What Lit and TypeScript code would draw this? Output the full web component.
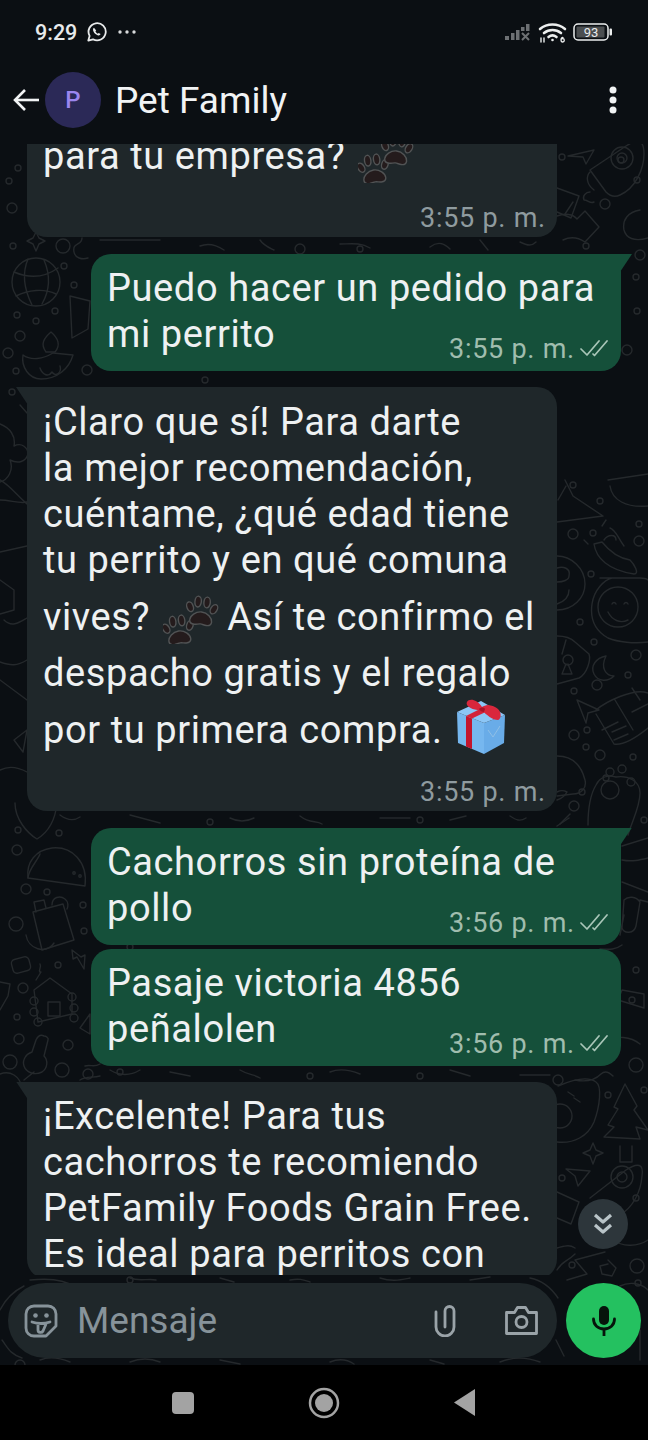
import { LitElement, html, css, svg } from "lit";
import { customElement } from "lit/decorators.js";

type Line = { text: string; tall?: boolean; emoji?: "paws" | "gift"; after?: string };
type Msg = { out: boolean; time: string; lines: Line[]; gap: number; first?: boolean; tail?: boolean; roomy?: boolean };

const MESSAGES: Msg[] = [
  { out: false, time: "3:55 p. m.", first: true, gap: 0, lines: [{ text: "para tu empresa?", emoji: "paws" }] },
  { out: true, time: "3:55 p. m.", gap: 17, tail: true, lines: [{ text: "Puedo hacer un pedido para" }, { text: "mi perrito" }] },
  {
    out: false, time: "3:55 p. m.", gap: 16, tail: true, roomy: true,
    lines: [
      { text: "¡Claro que sí! Para darte" },
      { text: "la mejor recomendación," },
      { text: "cuéntame, ¿qué edad tiene" },
      { text: "tu perrito y en qué comuna" },
      { text: "vives?", emoji: "paws", after: "Así te confirmo el", tall: true },
      { text: "despacho gratis y el regalo", tall: true },
      { text: "por tu primera compra.", emoji: "gift", tall: true },
    ],
  },
  { out: true, time: "3:56 p. m.", gap: 17, tail: true, lines: [{ text: "Cachorros sin proteína de" }, { text: "pollo" }] },
  { out: true, time: "3:56 p. m.", gap: 4, lines: [{ text: "Pasaje victoria 4856" }, { text: "peñalolen" }] },
  {
    out: false, time: "", gap: 16, tail: true,
    lines: [
      { text: "¡Excelente! Para tus" },
      { text: "cachorros te recomiendo" },
      { text: "PetFamily Foods Grain Free." },
      { text: "Es ideal para perritos con" },
    ],
  },
];

const paw = (x: number, y: number, s: number) => svg`
  <g transform="translate(${x} ${y}) rotate(${s})" fill="#241b1c" stroke="#515354" stroke-width="1.4">
    <path d="M0 4c-6 0-11 5-11 9 0 3 2 4 5 4 2 0 4-1 6-1s4 1 6 1c3 0 5-1 5-4 0-4-5-9-11-9z"/>
    <ellipse cx="-12" cy="0" rx="3.2" ry="5" transform="rotate(-25 -12 0)"/>
    <ellipse cx="-4.5" cy="-6" rx="3.2" ry="5.4"/>
    <ellipse cx="4.5" cy="-6" rx="3.2" ry="5.4"/>
    <ellipse cx="12" cy="0" rx="3.2" ry="5" transform="rotate(25 12 0)"/>
  </g>`;

const PAWS = html`<svg class="emoji paws" viewBox="0 0 56 54">${paw(15, 37, -8)}${paw(39, 18, 6)}</svg>`;

const GIFT = html`<svg class="emoji gift" viewBox="0 0 50 56">
  <path d="M0 13 27 24V55L1 44z" fill="#76b7ef"/>
  <path d="M27 24 48 16 47 44 27 55z" fill="#69ace8"/>
  <path d="M0 13 24 2 48 16 27 24z" fill="#8cc6f6"/>
  <path d="M9 17 15 19.500V50L9 47.500z" fill="#c3152e"/>
  <path d="M9 17 31 6 37 9 15 19.500z" fill="#d3233a"/>
  <path d="M31 31 36 38 43 27" fill="none" stroke="#8fbfe6" stroke-width="1"/>
  <path d="M23 11C15 11 8 7 10 3c2-4 10-3 15 5 4-3 12-2 16 2 4 4 3 10 0 11-5 0-12-5-16-10z" fill="#d9273c"/>
  <path d="M22 10c2-2 5-2 6 0l-1 3c-2 0-4-1-5-3z" fill="#a81229"/>
</svg>`;

const ring = (cx: number, cy: number, r = 4) => svg`<circle cx=${cx} cy=${cy} r=${r}/>`;
const RINGS: [number, number, number][] = [
  [13, 246, 3], [63, 246, 7], [64, 266, 3], [74, 285, 3], [17, 315, 3], [55, 311, 3], [36, 321, 3], [20, 336, 5], [8, 353, 5], [16, 371, 3], [87, 370, 5], [12, 392, 3],
  [18, 830, 3], [59, 833, 3], [71, 802, 3], [17, 850, 5], [26, 889, 5], [47, 892, 3], [83, 905, 3], [16, 924, 7], [84, 931, 3], [58, 965, 3], [23, 988, 5], [17, 1017, 3], [19, 1039, 5], [68, 1045, 5], [10, 1062, 7], [62, 1070, 7],
  [573, 485, 3], [600, 501, 3], [573, 534, 5], [593, 533, 3], [639, 524, 3], [639, 541, 5], [591, 574, 3], [580, 622, 3], [594, 642, 3], [636, 655, 5], [628, 675, 3], [597, 685, 5], [574, 691, 3],
  [574, 735, 5], [587, 730, 3], [586, 747, 3], [600, 755, 5], [633, 757, 3], [582, 792, 3], [574, 806, 5], [644, 820, 3],
  [632, 1000, 3], [636, 970, 3], [558, 1080, 5], [608, 1095, 3], [636, 1065, 7], [644, 1090, 3], [562, 1178, 3], [636, 1198, 3], [572, 1265, 3], [637, 1266, 7], [638, 1283, 3],
  [621, 160, 3], [637, 180, 3], [562, 157, 3], [605, 204, 5], [636, 277, 3], [640, 255, 5], [586, 246, 3], [637, 311, 3], [627, 350, 5],
  [18, 168, 3], [12, 208, 5], [9, 181, 3], [120, 1072, 3], [88, 1074, 5], [420, 1076, 3], [310, 1076, 3], [210, 822, 3], [420, 820, 3], [205, 380, 3], [300, 249, 5], [360, 249, 3], [130, 1280, 3], [20, 1365, 5], [130, 947, 3],
];

const DOODLES = svg`
  <g transform="translate(0 -144)">
    <!-- rockets -->
    <path d="M590 170 626 146c14-9 18-4 18 8 0 14-8 34-24 41-6 3-10 1-14-3z"/><circle cx="622" cy="158" r="11"/><circle cx="622" cy="158" r="5"/>
    <path d="M590 172c-4 4-4 12 4 18 M590 192c-4 0-8 4-6 8 4 0 6 4 10 2"/>
    <path d="M590 1198 626 1170c12-8 18-6 16 6-1 14-8 32-24 40l-16 4"/><circle cx="622" cy="1177" r="11"/><circle cx="622" cy="1177" r="5"/>
    <path d="M568 156l26-6-8 14-3-7z"/><path d="M566 1169l24 2-12 15-3-10z"/>
    <path d="M557 188l22 8-8 22-14-6 M565 214l8-12"/><path d="M557 1192l22 10-8 22-14-6"/>
    <path d="M557 216c8-3 16-2 20 3l8-8 14 16-14 15c-6-4-14-6-22-2"/>
    <path d="M640 210c-12 2-18 10-16 20 2 8 10 12 24 8"/>
    <!-- globe, lamp -->
    <circle cx="36" cy="282" r="24"/><path d="M14 272c14 6 30 6 44-4 M16 296c12-6 28-8 40-2 M28 259c-6 14-4 30 4 46 M44 260c6 14 6 30-2 44"/>
    <path d="M36 232l3 6 6 3-6 3-3 7-3-7-6-3 6-3z"/>
    <path d="M70 296l20 5-2 28-16 9z"/>
    <path d="M23 355c8 6 20 4 30-2l20 2c-4 14-16 24-32 24-12 0-20-12-18-24z"/><path d="M46 352c-6-8-2-14 5-20 7 6 10 13 4 20z"/><path d="M40 368c2 6 8 10 12 4 4 6 10 0 8-6"/>
    <path d="M82 238c0 8-10 4-8 14 1 6 8 8 14 6"/>
    <!-- left cloud -->
    <path d="M0 424c10 4 16 12 14 22 8-4 14 2 14 8 -2 8-10 10-18 6 4 10-2 20-10 22"/><path d="M0 500c10 0 20 4 27 2"/><path d="M0 480c8 4 16 14 27 24"/>
    <path d="M0 552l27-6"/><path d="M20 405l7 8"/><path d="M4 620c8 8 16 2 23-2"/><path d="M0 680l27 20"/><path d="M14 740l13-10-4 22z"/><path d="M0 770c8-4 16-4 27 2"/>
    <path d="M0 580l14 10v20l-14 4"/><path d="M27 660c-10 6-16 6-27 2"/>
    <!-- shield, taco, bag, house, key -->
    <path d="M15 803c0 16 12 30 22 36 10-6 18-16 20-36"/>
    <path d="M28 878c-2-16 8-28 24-30 20-2 36 14 33 38z"/><path d="M28 878c0-8 10-18 12-24"/><circle cx="74" cy="873" r="1.2"/><circle cx="80" cy="876" r="1.2"/>
    <path d="M33 912l30-8 11 36-32 10z"/><path d="M36 912l-2-10 10-2 2 8 M52 905c0-8 8-10 13-6 4 3 3 8 2 10"/>
    <path d="M26 935c2 14 20 20 28 8"/><path d="M72 950l9 7 4-2-1 14-7-12-4 2z"/>
    <rect x="12" y="958" width="18" height="14" rx="4" transform="rotate(-15 21 965)"/>
    <path d="M0 982l10 2-2 12-8 14"/><path d="M34 990l16-12 22 16v20l-34 8z"/><rect x="48" y="1002" width="12" height="14"/><circle cx="34" cy="1001" r="4"/><circle cx="34" cy="1012" r="4"/><circle cx="38" cy="1022" r="4"/><circle cx="72" cy="997" r="4"/><circle cx="74" cy="1008" r="4"/><circle cx="74" cy="1018" r="4"/>
    <path d="M36 980l5-8 M40 972c-2-3 2-4 0-8"/><path d="M80 1028l10-14v20z"/>
    <path d="M44 1036c-4-2-6 0-8 4l-4 12c-6 2-10 8-8 14 2 6 10 10 18 6 6-4 6-12 2-16l4-16c1-2-2-4-4-4z"/><path d="M24 1080l10-8"/>
    <path d="M85 1066c6-2 8 2 15-2"/><path d="M80 1080c6-4 12-2 20-4"/><path d="M0 1074c10-4 20 2 22 14"/>
    <!-- pepper, triangle, smiley, lock, moon -->
    <path d="M565 480l8 16 30 20-46 6"/><path d="M558 500l8-14"/><path d="M610 486c2 14 16 22 38 20"/><path d="M608 480l40-6"/>
    <path d="M594 544c2 14 14 26 40 30 6 0 0-10-4-14-12-2-20-8-28-18z"/><path d="M610 528c6 2 8 10 14 18 M604 540c4-6 12-6 12 0 M588 544l-4-4"/><path d="M602 526l4-6"/>
    <path d="M557 556c14 0 28 12 28 28 0 14-12 26-28 26"/><path d="M557 568c6-2 14 0 12 8 0 4-6 6-12 6 M557 604c6-2 12-6 12-14"/>
    <path d="M600 578h40c6 0 8 2 8 2 M648 642c-14 2-30 0-40-4-14-8-18-20-16-34 2-14 12-24 20-26"/><circle cx="618" cy="607" r="20"/><path d="M612 604c1-2 3-2 4 0 M624 604c1-2 3-2 4 0 M608 612c4 8 12 12 20 8"/>
    <path d="M557 636c6 0 14 2 18 6l14 12c2 6-2 20-10 24l-22 6"/><path d="M566 640l-4 14"/><circle cx="568" cy="660" r="5"/><path d="M566 664l-4 10h10l-4-10"/>
    <path d="M606 656c-10 2-16 10-12 18 4 8 14 8 20 2-8 0-14-8-8-20z"/>
    <path d="M577 700l22 10-11 3-2 10z"/>
    <path d="M596 710c12-10 36-20 48-18l8 2 M596 714l18 30c10 2 24-8 34-16 M615 700l18 30 M618 722l-16 8 M640 700l-8-12 M632 712l16-8"/><path d="M612 732l14-6 M614 740l14-6"/>
    <!-- burger, paw -->
    <path d="M557 756c14 0 24 8 28 24 2 8-4 14-12 14l-16 2"/><path d="M557 800c6-2 8-4 10-8-4-2-6-2-10 0"/>
    <path d="M588 825c0-18 2-30 8-40 4-8 12-10 20-8 12-2 24 4 24 16 0 14-8 28-12 42"/><circle cx="610" cy="790" r="9"/><circle cx="610" cy="772" r="4"/><circle cx="622" cy="769" r="4"/><circle cx="631" cy="782" r="4"/><circle cx="606" cy="778" r="3"/>
    <path d="M557 826l12-8"/><path d="M560 824l10-10"/>
    <!-- bottle/food lower right -->
    <path d="M622 846l26-8 M622 860c10 2 18 0 26-2 M622 882l26 10"/><path d="M624 915l-4 20 M624 900c4-4 12-4 16 2l-4 24c-2 8-12 8-14 2z M640 900l8 2"/>
    <path d="M622 990l-4 10 26 8v-14z"/><path d="M622 945c-8 6-16 4-22 4"/><path d="M610 1040c6-4 20-4 30 4"/>
    <!-- lower right avatar, tree -->
    <path d="M575 1080c10 2 20 0 26-6 4-4 8-2 12 2"/>
    <path d="M558 1086c14-6 30-10 38-4 6 4 4 24-2 40-6 14-20 22-37 20"/><circle cx="560" cy="1116" r="12"/><path d="M568 1092l6 4 M574 1098l6 4"/>
    <path d="M625 1084l12 22-3 4 14 20-12-3 4 12-36-2 10-10-6-2 10-16-4-2z"/><path d="M632 1146v16h-12v-16"/>
    <path d="M593 1143l3 7 7 3-7 3-3 8-3-8-7-3 7-3z"/><path d="M608 1260l8 8-4 8-10-2-2-8 8-2"/>
    <path d="M605 1252l-30 8 12 14-20 6"/>
    <path d="M557 1248c8-2 12-4 18 0 M575 1254c-8 8-12 6-18 16"/><path d="M612 1240c10 6 24 8 36 0"/><path d="M620 1286c8-4 20-4 28 4"/>
    <!-- gaps between bubbles -->
    <path d="M100 240h60 M200 246c10-4 18 0 24 4 M260 240c4 6 10 8 14 10 M340 244c10 0 20-2 30 4 M430 247c8-6 14-4 20 2 M480 240l8 10 M520 242c8 4 12 4 16 0"/>
    <path d="M60 815c8 6 14 6 20 2 M130 815l30 8 M230 818c8 4 16 4 24 0 M300 816c10 8 16 4 22 8 M380 818h30 M450 820l16-4 M510 816c6 4 10 6 16 2"/>
    <path d="M110 1070c10 6 20 6 30 0 M170 1072l20 4 M240 1070c10 6 14 4 20 8 M330 1072c10-4 20-2 30 2 M450 1070l20 6 M520 1075h30"/>
    <path d="M30 1280c20-2 30 0 40 4 M130 1278c10 4 18 0 26 2 M220 1278l14 4 M290 1280c10-2 14 0 20 2 M380 1278c12 4 20 2 30 0 M470 1280l20-3 M530 1278c10 2 20 8 28 20"/>
    <path d="M40 1360c10-4 20-2 30 2 M130 1362c10-4 20-4 30 0 M220 1360l20 4 M330 1362c10-4 18-2 24 2 M430 1360l14 4 M500 1362c10-4 24-6 40 0 M556 1340l8 16 M640 1330v30"/>
    <path d="M0 1310c4-8 12-18 24-24"/><path d="M2 1340c6 8 8 14 20 18"/>
    ${RINGS.map(([x, y, r]) => ring(x, y, r))}
  </g>`;

@customElement("app-root")
export class AppRoot extends LitElement {
  static styles = css`
    :host {
      display: block;
      width: 648px;
      height: 1440px;
      font-family: Roboto, "Noto Sans", sans-serif;
      background: #000;
      color: #eef1f2;
    }
    .screen {
      height: 1440px;
      display: flex;
      flex-direction: column;
    }
    .top {
      flex: none;
      height: 144px;
      background: #0b0f13;
      box-sizing: border-box;
    }
    .status {
      height: 56px;
      padding: 8px 35px 0 35px;
      box-sizing: border-box;
      display: flex;
      align-items: center;
      gap: 10px;
      font-size: 21.5px;
      font-weight: 500;
      color: #e8eaeb;
    }
    .status .right {
      margin-left: auto;
      display: flex;
      align-items: center;
      gap: 6px;
    }
    .batt {
      font-size: 13px;
      font-weight: 400;
      fill: #e8eaeb;
      font-family: Roboto, sans-serif;
    }
    .toolbar {
      height: 88px;
      display: flex;
      align-items: center;
      padding: 0 31px 0 13px;
    }
    .avatar {
      width: 56px;
      height: 56px;
      border-radius: 50%;
      background: #2b2957;
      color: #9b86ee;
      font-size: 24px;
      font-weight: 500;
      display: flex;
      align-items: center;
      justify-content: center;
      margin-left: 6px;
    }
    .title {
      font-size: 37px;
      margin-left: 14px;
      color: #f1f3f4;
    }
    .kebab {
      margin-left: auto;
    }
    .chat {
      flex: 1;
      min-height: 0;
      position: relative;
      background: #0b0f13;
      display: flex;
      flex-direction: column;
      overflow: hidden;
    }
    .doodles {
      position: absolute;
      inset: 0;
      width: 648px;
      height: 1221px;
      fill: none;
      stroke: #25292c;
      stroke-width: 1.4;
      stroke-linecap: round;
      stroke-linejoin: round;
    }
    .list {
      flex: 1;
      min-height: 0;
      overflow: hidden;
      position: relative;
      display: flex;
      flex-direction: column;
    }
    .bubble {
      flex: none;
      position: relative;
      width: 530px;
      box-sizing: border-box;
      border-radius: 20px;
      padding: 11px 13px 2px 16px;
      font-size: 38px;
      letter-spacing: 0.6px;
      background: #1f272a;
      margin-left: 27px;
    }
    .bubble.roomy {
      padding-top: 12px;
    }
    .bubble.out {
      background: #15503a;
      margin-left: 91px;
      padding: 11px 13px 14px 16px;
    }
    .bubble.tail.in-msg {
      border-top-left-radius: 0;
    }
    .bubble.tail.out {
      border-top-right-radius: 0;
    }
    .bubble.tail::before {
      content: "";
      position: absolute;
      top: 0;
      width: 12px;
      height: 18px;
      background: inherit;
    }
    .bubble.tail.in-msg::before {
      left: -11px;
      clip-path: polygon(0 0, 100% 0, 100% 100%);
    }
    .bubble.tail.out::before {
      right: -11px;
      clip-path: polygon(0 0, 100% 0, 0 100%);
    }
    .line {
      height: 46px;
      line-height: 46px;
      white-space: nowrap;
      display: flex;
      align-items: center;
    }
    .line.tall {
      padding-top: 10.5px;
    }
    .line.last {
      justify-content: space-between;
    }
    .emoji {
      flex: none;
    }
    .paws {
      width: 56px;
      height: 54px;
      margin: 0 8px 0 13px;
    }
    .gift {
      width: 50px;
      height: 56px;
      margin: -6px 0 0 14px;
    }
    .time {
      font-size: 27px;
      line-height: 34px;
      letter-spacing: 0.75px;
      color: #8f9b9f;
      text-align: right;
      margin: 22px -2px 0 0;
    }
    .line .time {
      margin: 0 0 -9px 0;
      align-self: flex-end;
      color: #a0bdae;
      display: flex;
      align-items: center;
      gap: 5px;
    }
    .composer {
      flex: none;
      position: relative;
      height: 90px;
      box-sizing: border-box;
      padding: 8px 7px 7px 8px;
      display: flex;
      gap: 9px;
    }
    .pill {
      flex: 1;
      border-radius: 38px;
      background: #1f272a;
      display: flex;
      align-items: center;
      padding: 0 19px 0 16px;
    }
    .pill .hint {
      font-size: 37px;
      color: #87939a;
      margin-left: 19px;
      flex: 1;
    }
    .pill .clip {
      margin-right: 49px;
    }
    .mic {
      flex: none;
      width: 75px;
      height: 75px;
      border-radius: 50%;
      background: #24c160;
      display: flex;
      align-items: center;
      justify-content: center;
    }
    .scroll {
      position: absolute;
      left: 578px;
      top: 1055px;
      width: 50px;
      height: 50px;
      border-radius: 50%;
      background: #2d363b;
      display: flex;
      align-items: center;
      justify-content: center;
    }
    .nav {
      flex: none;
      height: 75px;
      background: #000;
      display: flex;
      align-items: center;
      position: relative;
      padding: 0 172px;
      justify-content: space-between;
    }
    .nav .sq {
      width: 22px;
      height: 22px;
      border-radius: 4px;
      background: #a3a3a3;
    }
  `;

  renderBubble(m: Msg) {
    const cls = `bubble ${m.out ? "out" : "in-msg"} ${m.tail ? "tail" : ""} ${m.roomy ? "roomy" : ""}`;
    return html`
      <div class=${cls} style="margin-top:${m.first ? -22 : m.gap}px">
        ${m.lines.map((l, i) => this.renderLine(m, l, i === m.lines.length - 1))}
        ${!m.out && m.time ? html`<div class="time">${m.time}</div>` : ""}
      </div>
    `;
  }

  renderLine(m: Msg, l: Line, last: boolean) {
    const emoji = l.emoji === "paws" ? PAWS : l.emoji === "gift" ? GIFT : "";
    const isOutLast = m.out && last;
    return html`
      <div class="line ${l.tall ? "tall" : ""} ${isOutLast ? "last" : ""}">
        <span>${l.text}</span>${emoji}${l.after ? html`<span>${l.after}</span>` : ""}
        ${isOutLast
          ? html`<span class="time">${m.time}
              <svg width="28" height="18" viewBox="0 0 28 18" fill="none" stroke="#a9c6b8" stroke-width="1.7" stroke-linecap="round" stroke-linejoin="round">
                <path d="M1 9l6 6L19 1"/><path d="M13 14l1.5 1.5L27 1"/>
              </svg></span>`
          : ""}
      </div>
    `;
  }

  render() {
    return html`
      <div class="screen">
        <div class="top">
          <div class="status">
            <span>9:29</span>
            <svg width="20" height="20" viewBox="0 0 20 20" fill="none" stroke="#e8eaeb" stroke-width="1.8">
              <path d="M1.3 18.6l1.3-4.7A8.6 8.6 0 1 1 6 17.3z" stroke-linejoin="round"/>
              <path d="M7 5.8c-1 .6-1.3 2 -.5 3.7 1 2 2.7 3.4 4.6 3.9 1.2.2 2.2-.3 2.5-1.4l-1.9-1.1-1 .8c-1-.5-1.8-1.3-2.3-2.4l.8-.9z" fill="#e8eaeb" stroke="none"/>
            </svg>
            <svg width="20" height="6" viewBox="0 0 20 6" fill="#d8dadb"><circle cx="3" cy="3" r="1.7"/><circle cx="10" cy="3" r="1.7"/><circle cx="17" cy="3" r="1.7"/></svg>
            <span class="right">
              <svg width="27" height="17" viewBox="0 0 27 17" fill="#6d7073">
                <rect x="0" y="12" width="4" height="4"/><rect x="6" y="9" width="3.5" height="7"/><rect x="11" y="6" width="3.5" height="10"/><rect x="16" y="3" width="3.5" height="4"/><rect x="21" y="0" width="3.5" height="7"/>
                <path d="M17 9l7 7M24 9l-7 7" stroke="#6d7073" stroke-width="2"/>
              </svg>
              <svg width="29" height="21" viewBox="0 0 29 21" fill="none" stroke="#eceeee" stroke-width="2.6" stroke-linecap="round">
                <path d="M2 7c7-6 18-6 25 0"/><path d="M6 11c5-4 12-4 17 0"/><path d="M10.500 15c2.500-2 5.500-2 8 0"/>
                <circle cx="14.500" cy="18" r="1.300" fill="#eceeee" stroke="none"/>
                <path d="M3 20v-4M6 20v-4" stroke-width="1.400"/>
                <path d="M25 15.500c-1-.3-2 .5-2 2.200 0 1.500.7 2.300 1.700 2.300s1.600-.8 1.600-1.700-.6-1.600-1.500-1.600-1.800.6-1.800 1.400" stroke-width="1.300"/>
              </svg>
              <svg width="40" height="18" viewBox="0 0 40 18">
                <rect x="1" y="1" width="34" height="16" rx="4" fill="none" stroke="#eceeee" stroke-width="1.500"/>
                <rect x="3.500" y="3.500" width="28" height="11" rx="1" fill="#4b4e50"/>
                <rect x="36.500" y="5.500" width="2.500" height="7" rx="1" fill="#eceeee"/>
                <text class="batt" x="18" y="14" text-anchor="middle">93</text>
              </svg>
            </span>
          </div>
          <div class="toolbar">
            <svg width="26" height="24" viewBox="0 0 26 24" fill="none" stroke="#f1f3f4" stroke-width="2.600">
              <path d="M26 12H2"/><path d="M12 2 2 12l10 10"/>
            </svg>
            <div class="avatar">P</div>
            <div class="title">Pet Family</div>
            <svg class="kebab" width="8" height="28" viewBox="0 0 8 28" fill="#f1f3f4"><circle cx="4" cy="4" r="3.500"/><circle cx="4" cy="14" r="3.500"/><circle cx="4" cy="24" r="3.500"/></svg>
          </div>
        </div>

        <div class="chat">
          <svg class="doodles" viewBox="0 0 648 1221">${DOODLES}</svg>
          <div class="list">${MESSAGES.map((m) => this.renderBubble(m))}</div>
          <div class="composer">
            <div class="pill">
              <svg width="34" height="34" viewBox="0 0 34 34" fill="none" stroke="#87939a" stroke-width="2.800" stroke-linejoin="round" stroke-linecap="round">
                <path d="M10 2h14c4.500 0 8 3.500 8 8v12L22 32H10c-4.500 0-8-3.500-8-8V10c0-4.500 3.500-8 8-8z"/>
                <path d="M8 18c6 2 12 2 18 0M14 20v6c0 3 4 3 5 1l3-7"/>
                <circle cx="11.500" cy="11.500" r="2.300" fill="#87939a" stroke="none"/><circle cx="22.500" cy="11.500" r="2.300" fill="#87939a" stroke="none"/>
              </svg>
              <span class="hint">Mensaje</span>
              <svg class="clip" width="22" height="32" viewBox="0 0 22 32" fill="none" stroke="#9aa3a8" stroke-width="2.800" stroke-linecap="round">
                <path d="M2 7v15a9 9 0 0 0 18 0V6a4.500 4.500 0 0 0-9 0v16"/>
              </svg>
              <svg width="33" height="29" viewBox="0 0 33 29" fill="none" stroke="#9aa3a8" stroke-width="2.800" stroke-linejoin="round">
                <path d="M1.500 6.500h8l3-5h8l3 5h8v21h-30z"/><circle cx="16.500" cy="16" r="5.500"/>
              </svg>
            </div>
            <div class="mic">
              <svg width="24" height="32" viewBox="0 0 24 32">
                <rect x="7" y="1" width="10" height="19" rx="5" fill="#06140b"/>
                <path d="M1.500 14c0 6 4.500 10 10.500 10s10.500-4 10.500-10" fill="none" stroke="#06140b" stroke-width="2.800" stroke-linecap="round"/>
                <path d="M12 24v7" stroke="#06140b" stroke-width="2.800"/>
              </svg>
            </div>
          </div>
          <div class="scroll">
            <svg width="20" height="22" viewBox="0 0 20 22" fill="none" stroke="#b9c4c8" stroke-width="3.200" stroke-linejoin="round">
              <path d="M2 2l8 7 8-7"/><path d="M2 12l8 7 8-7"/>
            </svg>
          </div>
        </div>

        <div class="nav">
          <div class="sq"></div>
          <svg width="32" height="32" viewBox="0 0 32 32">
            <circle cx="16" cy="16" r="14" fill="none" stroke="#a3a3a3" stroke-width="2.500"/><circle cx="16" cy="16" r="9" fill="#a3a3a3"/>
          </svg>
          <svg width="22" height="27" viewBox="0 0 22 27"><path d="M21 0v27L0 13.500z" fill="#a3a3a3"/></svg>
        </div>
      </div>
    `;
  }
}
